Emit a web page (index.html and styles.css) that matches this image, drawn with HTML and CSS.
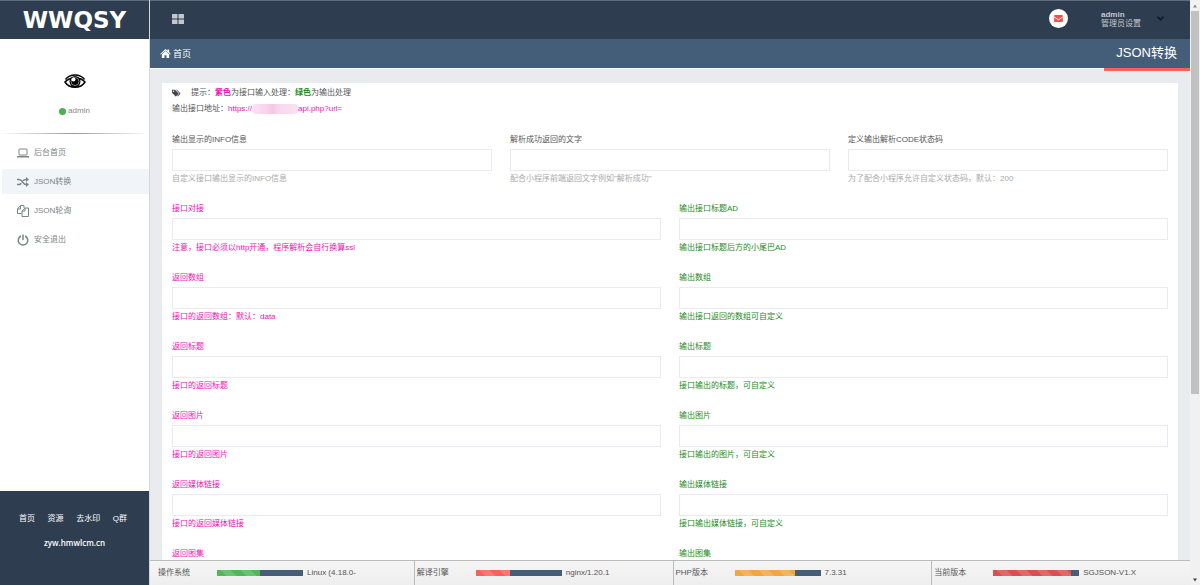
FILE: index.html
```
<!DOCTYPE html>
<html lang="zh-CN">
<head>
  <meta charset="UTF-8" />
  <title>JSON转换</title>
  <meta name="viewport" content="width=device-width, initial-scale=1.0" />
  <link rel="stylesheet" href="styles.css">
</head>
<body>
  <aside class="sidebar">
    <a class="logo" href="#">WWQSY</a>
    <div class="profile">
      <svg class="eye" viewBox="0 0 44 30">
        <path d="M2 16C11 5 33 5 42 16C33 30 11 30 2 16Z" fill="#fff" stroke="#000" stroke-width="3" />
        <path d="M3 11C12-1 32-1 41 11" fill="none" stroke="#000" stroke-width="3" />
        <circle cx="22" cy="15" r="11" fill="#000" />
        <circle cx="22" cy="15" r="8" fill="none" stroke="#888" stroke-width="2" />
        <circle cx="19" cy="11" r="4" fill="#fff" />
      </svg>
      <p class="user"><span class="dot"></span>admin</p>
    </div>
    <nav class="menu">
      <a href="#">
        <svg viewBox="0 0 24 20" fill="none" stroke="currentColor" stroke-width="2"><rect x="4" y="2" width="16" height="12" rx="1" /><path d="M0 17.500H24" stroke-width="3" /></svg>
        后台首页
      </a>
      <a href="#" class="active">
        <svg viewBox="0 0 24 20" fill="none" stroke="currentColor" stroke-width="3"><path d="M0 5H4C11 5 11 15 18 15H19M0 15H4C6 15 7.500 14 8.500 12.500M12 7.500C13.500 5.500 15 5 18 5H19" /><path d="M18 0L24 5L18 10ZM18 10L24 15L18 20Z" fill="currentColor" stroke="none" /></svg>
        JSON转换
      </a>
      <a href="#">
        <svg viewBox="0 0 24 24" fill="none" stroke="currentColor" stroke-width="2"><path d="M9 17H1V8L7 1H14V6M7 1V8H1M16 6H23V23H10V12ZM16 6V12H10" /></svg>
        JSON轮询
      </a>
      <a href="#">
        <svg viewBox="0 0 24 24" fill="none" stroke="currentColor" stroke-width="3" stroke-linecap="round"><path d="M7 4.500A9.500 9.500 0 1 0 17 4.500M12 2V11" /></svg>
        安全退出
      </a>
    </nav>
    <footer class="links">
      <div>
        <a href="#">首页</a>
        <a href="#">资源</a>
        <a href="#">去水印</a>
        <a href="#">Q群</a>
      </div>
      <a href="#">zyw.hmwlcm.cn</a>
    </footer>
  </aside>

  <div class="page">
    <header class="topbar">
      <button type="button" class="toggle" aria-label="菜单">
        <svg viewBox="0 0 24 20" fill="currentColor"><rect width="11" height="9" rx="1" /><rect x="13" width="11" height="9" rx="1" /><rect y="11" width="11" height="9" rx="1" /><rect x="13" y="11" width="11" height="9" rx="1" /></svg>
      </button>
      <button type="button" class="mail" aria-label="消息">
        <svg viewBox="0 0 20 16"><rect width="20" height="16" rx="2" fill="#fb4b4b" /><path d="M0 4.500L10 11L20 4.500" fill="none" stroke="#fff" stroke-width="2" /></svg>
      </button>
      <button type="button" class="account">
        <span><b>admin</b><br>管理员设置</span>
        <svg viewBox="0 0 12 8"><path d="M1 1L6 6L11 1" fill="none" stroke="#111b2b" stroke-width="3" /></svg>
      </button>
    </header>

    <div class="crumbs">
      <a href="#">
        <svg viewBox="0 0 26 22" fill="currentColor"><path d="M13 0L18 4.500V1H22V8L26 12L24.500 13.500L13 3.500L1.500 13.500L0 12Z" /><path d="M13 5L22 13V22H15.500V15H10.500V22H4V13Z" /></svg>
        首页
      </a>
      <h1>JSON转换</h1>
    </div>

    <main class="content">
      <form class="card">
        <p class="tip">
          <svg viewBox="0 0 24 20" fill="#444"><path fill-rule="evenodd" d="M0 1H8L18 11L10 19L0 9ZM4 3A2 2 0 1 0 4 7A2 2 0 1 0 4 3Z" /><path d="M11 1H13L23 11L15 19L13.500 17.500L20 11Z" /></svg>
          <span>提示：<span class="pink strong">紫色</span>为接口输入处理：<span class="green strong">绿色</span>为输出处理</span>
        </p>
        <p class="tip">输出接口地址：<span class="pink">https://</span><span class="mask"></span><span class="pink">api.php?url=</span></p>

        <div class="row three">
          <div class="field">
            <label for="info">输出显示的INFO信息</label>
            <input type="text" id="info" />
            <small>自定义接口输出显示的INFO信息</small>
          </div>
          <div class="field">
            <label for="msg">解析成功返回的文字</label>
            <input type="text" id="msg" />
            <small>配合小程序前端返回文字例如"解析成功"</small>
          </div>
          <div class="field">
            <label for="code">定义输出解析CODE状态码</label>
            <input type="text" id="code" />
            <small>为了配合小程序允许自定义状态码，默认：200</small>
          </div>
        </div>

        <div class="row two">
          <div class="field pink">
            <label for="api">接口对接</label>
            <input type="text" id="api" />
            <small>注意，接口必须以http开通，程序解析会自行换算ssl</small>
          </div>
          <div class="field green">
            <label for="ad">输出接口标题AD</label>
            <input type="text" id="ad" />
            <small>输出接口标题后方的小尾巴AD</small>
          </div>
          <div class="field pink">
            <label for="in-data">返回数组</label>
            <input type="text" id="in-data" />
            <small>接口的返回数组：默认：data</small>
          </div>
          <div class="field green">
            <label for="out-data">输出数组</label>
            <input type="text" id="out-data" />
            <small>输出接口返回的数组可自定义</small>
          </div>
          <div class="field pink">
            <label for="in-title">返回标题</label>
            <input type="text" id="in-title" />
            <small>接口的返回标题</small>
          </div>
          <div class="field green">
            <label for="out-title">输出标题</label>
            <input type="text" id="out-title" />
            <small>接口输出的标题，可自定义</small>
          </div>
          <div class="field pink">
            <label for="in-pic">返回图片</label>
            <input type="text" id="in-pic" />
            <small>接口的返回图片</small>
          </div>
          <div class="field green">
            <label for="out-pic">输出图片</label>
            <input type="text" id="out-pic" />
            <small>接口输出的图片，可自定义</small>
          </div>
          <div class="field pink">
            <label for="in-media">返回媒体链接</label>
            <input type="text" id="in-media" />
            <small>接口的返回媒体链接</small>
          </div>
          <div class="field green">
            <label for="out-media">输出媒体链接</label>
            <input type="text" id="out-media" />
            <small>接口输出媒体链接，可自定义</small>
          </div>
          <div class="field pink">
            <label for="in-album">返回图集</label>
            <input type="text" id="in-album" />
          </div>
          <div class="field green">
            <label for="out-album">输出图集</label>
            <input type="text" id="out-album" />
          </div>
        </div>
      </form>
    </main>

    <footer class="status">
      <div class="stat">
        <span class="name">操作系统</span>
        <div class="bar"><div class="fill ok" style="width: 50%"></div></div>
        <span>Linux (4.18.0-</span>
      </div>
      <div class="stat">
        <span class="name">解译引擎</span>
        <div class="bar"><div class="fill hot" style="width: 40%"></div></div>
        <span>nginx/1.20.1</span>
      </div>
      <div class="stat">
        <span class="name">PHP版本</span>
        <div class="bar"><div class="fill warn" style="width: 70%"></div></div>
        <span>7.3.31</span>
      </div>
      <div class="stat">
        <span class="name">当前版本</span>
        <div class="bar"><div class="fill danger" style="width: 90%"></div></div>
        <span>SGJSON-V1.X</span>
      </div>
    </footer>
  </div>

  <div class="scroll">
    <svg viewBox="0 0 10 10"><path d="M3 7L5 4L7 7Z" fill="#888" /></svg>
    <div class="track"><div class="thumb"></div></div>
    <svg viewBox="0 0 10 10"><path d="M3 4L5 7L7 4Z" fill="#444" /></svg>
  </div>
</body>
</html>
```
FILE: styles.css
```
* {
  box-sizing: border-box;
}

body {
  margin: 0;
  height: 100vh;
  display: flex;
  overflow: hidden;
  font-family: "Liberation Sans", "Noto Sans CJK SC", sans-serif;
  font-size: 8px;
  line-height: 16px;
  color: #555;
  background: #eaebef;
}

a {
  color: inherit;
  text-decoration: none;
}

p, h1 {
  margin: 0;
}

svg {
  display: block;
  flex: none;
}

button {
  padding: 0;
  border: none;
  background: none;
  font: inherit;
  color: inherit;
  cursor: pointer;
}

.pink {
  color: #f012b2;
}

.green {
  color: #1c8a1c;
}

.strong {
  font-weight: bold;
}

/* sidebar */
.sidebar {
  width: 150px;
  flex: none;
  display: flex;
  flex-direction: column;
  background: #fff;
  border-right: 1px solid #d5d7db;
}

.logo {
  height: 39px;
  background: #2e3e50;
  border-top: 1px solid #5b6d7c;
  color: #fff;
  font: bold 23px/38px "DejaVu Sans", sans-serif;
  text-align: center;
}

.profile {
  height: 95px;
  padding-top: 35px;
  display: flex;
  flex-direction: column;
  align-items: center;
  gap: 14px;
  border-bottom: 1px solid;
  border-image: linear-gradient(to right, #fff, #999, #fff) 1;
}

.eye {
  width: 22px;
  height: 15px;
}

.user {
  display: flex;
  align-items: center;
  gap: 2px;
  color: #888;
}

.dot {
  width: 7px;
  height: 7px;
  border-radius: 50%;
  background: #4cb050;
}

.menu {
  flex: 1;
  padding: 6px 0 0 2px;
  display: flex;
  flex-direction: column;
  gap: 4px;
  color: #7b8584;
}

.menu a {
  height: 25px;
  padding-left: 15px;
  display: flex;
  align-items: center;
  gap: 5px;
}

.menu .active {
  background: #f1f5f9;
}

.menu svg {
  width: 12px;
  height: 12px;
}

.links {
  height: 94px;
  padding-top: 20px;
  background: #2e3e50;
  color: #fff;
  text-align: center;
}

.links div {
  margin-bottom: 8px;
  padding: 0 22px 0 19px;
  display: flex;
  justify-content: space-between;
}

.links > a {
  font-family: "Open Sans", sans-serif;
  font-weight: 600;
}

/* page */
.page {
  flex: 1;
  min-width: 0;
  display: flex;
  flex-direction: column;
}

.topbar {
  height: 39px;
  flex: none;
  padding: 0 26px 3px 22px;
  display: flex;
  align-items: center;
  background: #2e3e50;
  border-top: 1px solid #5b6d7c;
  color: #c3c8cd;
}

.toggle {
  margin-right: auto;
}

.toggle svg {
  width: 12px;
  height: 10px;
}

.mail {
  width: 19px;
  height: 19px;
  margin-right: 33px;
  display: flex;
  align-items: center;
  justify-content: center;
  border-radius: 50%;
  background: #fff;
}

.mail svg {
  width: 9px;
  height: 7px;
}

.account {
  display: flex;
  align-items: center;
  gap: 16px;
  line-height: 9px;
  text-align: left;
}

.account svg {
  width: 7px;
  height: 5px;
}

.crumbs {
  height: 30px;
  flex: none;
  padding-left: 10px;
  display: flex;
  justify-content: space-between;
  background: #445e79;
  border-bottom: 1px solid #fff;
  color: #fff;
}

.crumbs a {
  display: flex;
  align-items: center;
  gap: 2px;
  font-size: 9px;
}

.crumbs svg {
  width: 11px;
  height: 9px;
}

.crumbs h1 {
  height: 32px;
  padding: 0 13px 0 12px;
  border-bottom: 3px solid #fb6158;
  font-size: 13px;
  font-weight: normal;
  line-height: 28px;
}

.content {
  flex: 1;
  min-height: 0;
  padding: 14px 12px 0;
  overflow: hidden;
}

.card {
  padding: 2px 10px 20px;
  background: #fff;
}

.tip {
  display: flex;
  align-items: center;
}

.tip svg {
  width: 9px;
  height: 8px;
  margin-right: 10px;
}

.mask {
  width: 46px;
  height: 10px;
  border-radius: 4px;
  background: linear-gradient(to right, #fbe3f4, #f9d3ed 30%, #f5c6e6 45%, #f9d8ef 60%, #fbe0f3);
}

.row {
  display: grid;
  column-gap: 18px;
  row-gap: 15px;
}

.three {
  grid-template-columns: repeat(3, 1fr);
  margin: 15px 0;
}

.two {
  grid-template-columns: repeat(2, 1fr);
}

.field {
  display: flex;
  flex-direction: column;
}

.field input {
  height: 22px;
  margin-top: 1px;
  padding: 2px 6px;
  border: 1px solid #e9eaf4;
  background: #fff;
  font: inherit;
}

.field small {
  font-size: 8px;
  line-height: 15px;
}

.three small {
  color: #aaa;
}

/* status bar */
.status {
  height: 25px;
  flex: none;
  padding-left: 6px;
  display: flex;
  background: linear-gradient(#f5f5f5, #eee);
  border-top: 1px solid #bbb;
}

.stat {
  flex: 1;
  padding-left: 2px;
  display: flex;
  align-items: center;
  border-right: 1px solid #bbb;
  white-space: nowrap;
}

.stat:last-child {
  border-right: none;
}

.stat .name {
  width: 59px;
}

.bar {
  width: 86px;
  height: 6px;
  margin-right: 4px;
  background: #445e79;
}

.fill {
  height: 100%;
  background-image: repeating-linear-gradient(45deg, transparent 0 7px, rgba(255, 255, 255, 0.15) 7px 14px);
}

.ok {
  background-color: #53b757;
}

.hot {
  background-color: #fb6158;
}

.warn {
  background-color: #f0a742;
}

.danger {
  background-color: #d9504c;
}

/* scrollbar */
.scroll {
  width: 10px;
  flex: none;
  display: flex;
  flex-direction: column;
  background: #f1f1f1;
}

.scroll svg {
  width: 10px;
  height: 11px;
}

.track {
  flex: 1;
  padding: 0 1px;
}

.thumb {
  height: 68%;
  background: #c1c1c1;
}
```
